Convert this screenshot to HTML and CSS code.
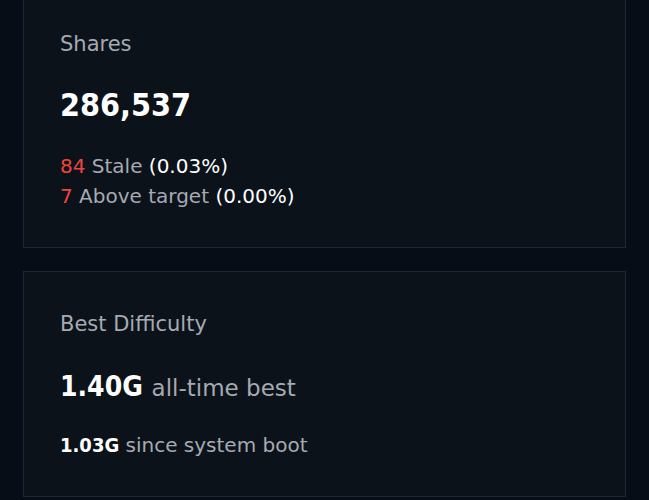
FILE: index.html
```html
<!DOCTYPE html>
<html lang="en">
<head>
    <meta charset="UTF-8">
    <meta name="viewport" content="width=device-width, initial-scale=1.0">
    <title>Shares</title>
    <link rel="stylesheet" href="styles.css">
</head>
<body>
    <div class="container">
        <div class="card shares">
            <div class="label">Shares</div>
            <div class="value">286,537</div>
            <div class="line"><span class="bad">84</span> Stale <span class="num">(0.03%)</span></div>
            <div class="line"><span class="bad">7</span> Above target <span class="num">(0.00%)</span></div>
        </div>
        <div class="card best">
            <div class="label">Best Difficulty</div>
            <div class="value">1.40G <span class="unit">all-time best</span></div>
            <div class="line sub"><span class="num strong">1.03G</span> since system boot</div>
        </div>
    </div>
</body>
</html>
```

FILE: styles.css
```css
body {
    font-family: 'DejaVu Sans', sans-serif;
    margin: 0;
    padding: 0;
    background-color: #070d16;
    color: #a5aab2;
    overflow: hidden;
}
.container {
    display: flex;
    flex-direction: column;
    gap: 23px;
    padding: 0 23px;
    margin-top: -9px;
}
.card {
    background-color: #0c121a;
    border: 1px solid #1e2733;
    padding: 40px 36px 36px;
}
.label {
    font-size: 21px;
    line-height: 24px;
}
.value {
    color: #ffffff;
    font-family: 'DejaVu Sans Condensed', 'DejaVu Sans', sans-serif;
    font-stretch: condensed;
    font-size: 32px;
    font-weight: bold;
    line-height: 36px;
    margin-top: 31px;
    margin-bottom: 28px;
}
.best .value {
    font-size: 28px;
    margin-top: 33px;
    margin-bottom: 24px;
}
.unit {
    color: #a5aab2;
    font-family: 'DejaVu Sans', sans-serif;
    font-stretch: normal;
    font-size: 23px;
    font-weight: normal;
}
.line {
    font-size: 20px;
    line-height: 30px;
}
.sub {
    margin-top: 3px;
}
.bad {
    color: #f0443a;
}
.num {
    color: #ffffff;
}
.strong {
    font-family: 'DejaVu Sans Condensed', 'DejaVu Sans', sans-serif;
    font-stretch: condensed;
    font-weight: bold;
}
```
